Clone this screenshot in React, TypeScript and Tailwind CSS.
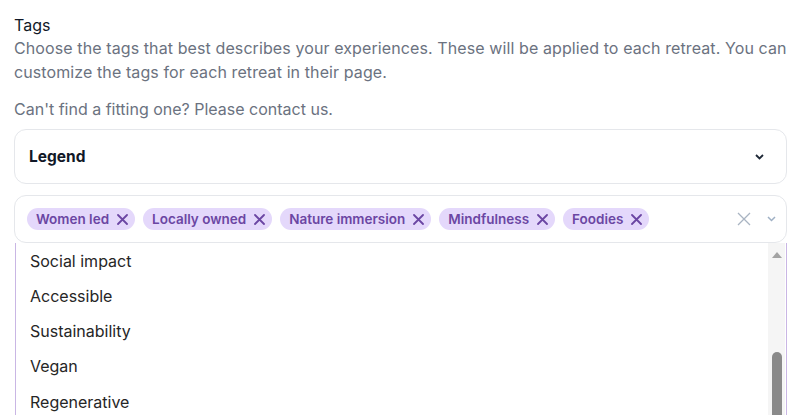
import React from "react";

const tags = ["Women led", "Locally owned", "Nature immersion", "Mindfulness", "Foodies"];
const options = ["Social impact", "Accessible", "Sustainability", "Vegan", "Regenerative"];

function SmallX({ className }: { className?: string }) {
  return (
    <svg width="11" height="11" viewBox="0 0 11 11" className={className}>
      <path d="M1 1 L10 10 M10 1 L1 10" stroke="currentColor" strokeWidth="1.8" strokeLinecap="round" />
    </svg>
  );
}

export default function App() {
  return (
    <div className="h-[415px] w-[805px] overflow-hidden bg-white" style={{ fontFamily: "Inter, 'Noto Sans', sans-serif" }}>
      <div className="pl-[14px] pt-[15px] w-[787px]">
        <div className="text-[16px] leading-[21px] text-[#111827]">Tags</div>
        <p className="text-[16px] leading-6 tracking-[0.1px] text-[#6b7280]">
          Choose the tags that best describes your experiences. These will be applied to each retreat. You can customize the tags for each retreat in their page.
        </p>
        <p className="mt-[13px] text-[16px] leading-6 text-[#6b7280]">Can't find a fitting one? Please contact us.</p>

        <div className="mt-2 h-[55px] rounded-xl border border-[#e5e7eb] flex items-center justify-between pl-[14px] pr-[22px]">
          <span className="text-[15.5px] font-bold text-[#111827]">Legend</span>
          <svg width="9" height="6" viewBox="0 0 9 6">
            <path d="M1 1 L4.5 4.5 L8 1" stroke="#1f2937" strokeWidth="1.8" fill="none" />
          </svg>
        </div>

        <div className="relative mt-[11px]">
          <div className="h-[48px] rounded-xl border border-[#e5e7eb] flex items-center pl-[12px] pr-[10px]">
            <div className="flex flex-1 items-center gap-2">
              {tags.map((t) => (
                <span
                  key={t}
                  className="flex h-[22px] items-center gap-[8px] rounded-full bg-[#e4d8fb] pl-[9px] pr-[7px] text-[13.5px] font-semibold text-[#6b46a3]"
                >
                  {t}
                  <SmallX />
                </span>
              ))}
            </div>
            <div className="flex items-center gap-[16px]">
              <svg width="14" height="14" viewBox="0 0 14 14">
                <path d="M1 1 L13 13 M13 1 L1 13" stroke="#a9b4c2" strokeWidth="1.3" />
              </svg>
              <svg width="9" height="6" viewBox="0 0 9 6">
                <path d="M1 1 L4.5 4.5 L8 1" stroke="#9fb0c4" strokeWidth="1.5" fill="none" />
              </svg>
            </div>
          </div>

          <div className="absolute left-[1px] right-0 top-[48px] h-[200px] border-x border-[#c9b6e4] bg-white flex">
            <div className="flex-1">
              {options.map((o) => (
                <div key={o} className="h-[35.25px] flex items-center pl-[14px] text-[16px] text-[#262626]">
                  {o}
                </div>
              ))}
            </div>
            <div className="w-[17px] bg-[#f5f5f5] flex flex-col items-center mr-[1px]">
              <svg width="12" height="8" viewBox="0 0 12 8" className="mt-[8px]">
                <path d="M6 1 L11 7 L1 7 Z" fill="#a3a3a3" />
              </svg>
              <div className="mt-[93px] w-[10px] flex-1 rounded-t-full bg-[#8a8a8a]" />
            </div>
          </div>
        </div>
      </div>
    </div>
  );
}
